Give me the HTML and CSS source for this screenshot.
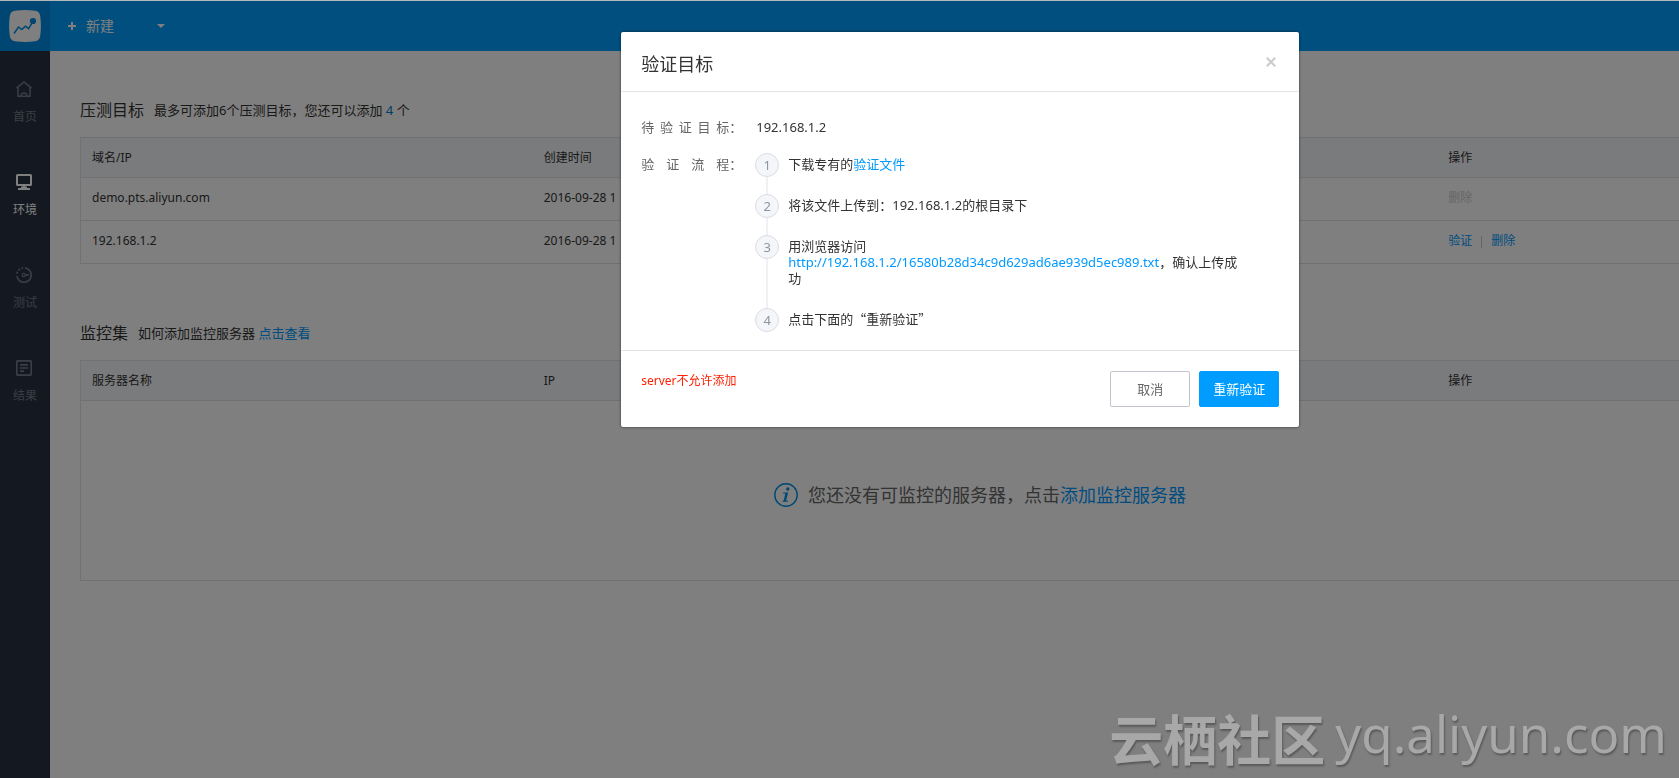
FILE: index.html
```html
<!DOCTYPE html>
<html lang="zh-CN">
<head>
<meta charset="utf-8">
<title>压测环境</title>
<link rel="stylesheet" href="styles.css">
</head>
<body>
<div class="app">
  <header class="topbar">
    <a class="logo" href="#" aria-label="PTS">
      <svg width="32" height="32" viewBox="0 0 32 32">
        <path d="M6 0.8Q16 -0.6 26 0.8Q30.6 1.4 31.2 6Q32.6 16 31.2 26Q30.6 30.6 26 31.2Q16 32.6 6 31.2Q1.4 30.6 0.8 26Q-0.6 16 0.8 6Q1.4 1.4 6 0.8Z" fill="#fff"/>
        <path d="M5 23.5L9.5 17L12.8 19.6L16.4 16.2L19.6 18.6L24 11.5" fill="none" stroke="#008ce6" stroke-width="1.5"/>
        <circle cx="24" cy="11" r="3.1" fill="#008ce6"/>
      </svg>
    </a>
    <button class="create" type="button">
      <svg width="8" height="8" viewBox="0 0 8 8"><path d="M4 0V8M0 4H8" stroke="currentColor" stroke-width="2"/></svg>
      <span class="create-text">新建</span>
      <svg width="8" height="4" viewBox="0 0 8 4"><path d="M0 0H8L4 4Z" fill="currentColor"/></svg>
    </button>
  </header>
  <div class="body">
    <nav class="sidebar">
      <a class="nav-item" href="#">
        <svg width="16" height="16" viewBox="0 0 16 16" fill="none" stroke="currentColor" stroke-width="1.5"><path d="M0.5 7.2L8 1L15.5 7.2M2 6V15.3H5.8M14 6V15.3H10.2M5 15.3C5 10.8 11 10.8 11 15.3M5 15.3H11"/></svg>
        <span>首页</span>
      </a>
      <a class="nav-item active" href="#">
        <svg width="16" height="16" viewBox="0 0 16 16" fill="none" stroke="currentColor" stroke-width="2"><rect x="1" y="1" width="14" height="10" rx="0.5"/><path d="M8 11V14M2 15H14M5 13.4H11"/></svg>
        <span>环境</span>
      </a>
      <a class="nav-item" href="#">
        <svg width="16" height="16" viewBox="0 0 16 16" fill="none" stroke="currentColor" stroke-width="1.7"><path d="M9 0.9A7.2 7.2 0 1 1 0.9 9"/><path d="M0.9 6.6A7.2 7.2 0 0 1 7 0.9" stroke-dasharray="2 1.6"/><circle cx="7.8" cy="8" r="1.6" stroke-width="1.2"/><path d="M9.4 8H13"/></svg>
        <span>测试</span>
      </a>
      <a class="nav-item" href="#">
        <svg width="16" height="16" viewBox="0 0 16 16" fill="none" stroke="currentColor" stroke-width="1.7"><rect x="0.8" y="0.8" width="14.4" height="14.4" rx="1"/><path d="M4 4.8H12M4 8H12M4 11.2H8"/></svg>
        <span>结果</span>
      </a>
    </nav>
    <main class="content">
      <section class="block">
        <div class="heading">
          <h2>压测目标</h2>
          <p>最多可添加6个压测目标，您还可以添加 <span class="count">4</span> 个</p>
        </div>
        <table class="grid">
          <thead><tr><th>域名/IP</th><th>创建时间</th><th></th><th>操作</th></tr></thead>
          <tbody>
            <tr><td>demo.pts.aliyun.com</td><td>2016-09-28 1</td><td></td><td><span class="disabled">删除</span></td></tr>
            <tr><td>192.168.1.2</td><td>2016-09-28 1</td><td></td><td><a href="#">验证</a><span class="divider"></span><a href="#">删除</a></td></tr>
          </tbody>
        </table>
      </section>
      <section class="block">
        <div class="heading">
          <h2>监控集</h2>
          <p>如何添加监控服务器 <a href="#">点击查看</a></p>
        </div>
        <table class="grid">
          <thead><tr><th>服务器名称</th><th>IP</th><th></th><th>操作</th></tr></thead>
          <tbody>
            <tr>
              <td class="empty" colspan="4">
                <div class="empty-inner">
                  <svg width="24" height="24" viewBox="0 0 24 24"><circle cx="12" cy="12" r="11.2" fill="none" stroke="#0091ea" stroke-width="1.4"/><circle cx="13.8" cy="6" r="1.7" fill="#0091ea"/><path d="M9.2 9.4H14.2L12 17.6H13.8V18.8H8.6V17.8H9.6L11.4 10.6H9Z" fill="#0091ea"/></svg>
                  <span>您还没有可监控的服务器，点击<a href="#">添加监控服务器</a></span>
                </div>
              </td>
            </tr>
          </tbody>
        </table>
      </section>
    </main>
  </div>
</div>

<div class="overlay">
  <div class="modal" role="dialog" aria-labelledby="modal-title">
    <div class="modal-head">
      <h1 id="modal-title">验证目标</h1>
      <button class="close" type="button" aria-label="关闭">
        <svg width="10" height="10" viewBox="0 0 10 10"><path d="M0.8 0.8L9.2 9.2M9.2 0.8L0.8 9.2" stroke="currentColor" stroke-width="2.2"/></svg>
      </button>
    </div>
    <div class="modal-body">
      <div class="field">
        <div class="label"><span>待验证目标</span>：</div>
        <div class="value">192.168.1.2</div>
      </div>
      <div class="field">
        <div class="label"><span>验证流程</span>：</div>
        <ol class="steps">
          <li><span class="num">1</span><p>下载专有的<a href="#">验证文件</a></p></li>
          <li><span class="num">2</span><p>将该文件上传到：192.168.1.2的根目录下</p></li>
          <li><span class="num">3</span><p>用浏览器访问<br><a href="#">http://192.168.1.2/16580b28d34c9d629ad6ae939d5ec989.txt</a>，确认上传成功</p></li>
          <li><span class="num">4</span><p class="cjk">点击下面的“重新验证”</p></li>
        </ol>
      </div>
    </div>
    <div class="modal-foot">
      <p class="error">server不允许添加</p>
      <button class="btn" type="button">取消</button>
      <button class="btn primary" type="button">重新验证</button>
    </div>
  </div>
</div>
<div class="watermark"><b>云栖社区</b><span>yq.aliyun.com</span></div>
</body>
</html>
```
FILE: styles.css
```css
* { box-sizing: border-box; }

html, body { height: 100%; }

body {
  margin: 0;
  overflow: hidden;
  border-top: 1px solid #b4b8ba;
  background: #fff;
  color: #333;
  font: 12px/16px "Noto Sans", "Noto Sans CJK SC", sans-serif;
}

h1, h2, p, ol { margin: 0; padding: 0; font-weight: 400; }
a { color: #0099ff; text-decoration: none; }
svg { display: block; flex: none; }
button { font: inherit; cursor: pointer; }

.app { display: flex; flex-direction: column; height: 100%; }

.topbar { display: flex; height: 50px; flex: none; background: #009fff; color: #fff; }
.logo { display: flex; width: 50px; align-items: center; justify-content: center; background: #008ce6; }
.create {
  display: flex;
  align-items: center;
  padding: 0 18px;
  border: 0;
  background: none;
  color: #fff;
  font-size: 14px;
}
.create-text { margin: 0 43px 0 10px; }

.body { display: flex; flex: 1; min-height: 0; }

.sidebar { display: flex; flex: none; flex-direction: column; gap: 45px; width: 50px; padding-top: 30px; background: #283243; }
.nav-item { display: flex; flex-direction: column; align-items: center; gap: 11px; height: 48px; color: #747b8a; }
.nav-item svg { margin-right: 2px; }
.nav-item span { line-height: 18px; }
.nav-item.active { color: #fff; }

.content { flex: 1; min-width: 0; padding: 47px 0 0 30px; overflow: hidden; }
.block { width: calc(100% + 211px); margin-bottom: 57px; }
.heading { display: flex; align-items: center; gap: 10px; height: 24px; margin-bottom: 15px; }
.heading h2 { font-size: 16px; }
.heading p { font-size: 13px; }
.count { color: #0078c8; }

.grid { width: 100%; table-layout: fixed; border-collapse: collapse; border: 1px solid #dfe3e8; }
.grid th, .grid td { height: 43px; padding: 0 11px 2px; border-bottom: 1px solid #dfe3e8; text-align: left; font-weight: 400; }
.grid th { height: 40px; padding-bottom: 0; background: #f5f6fa; }
.disabled { color: #ccc; }
.divider { display: inline-block; width: 1px; height: 12px; margin: 0 9px; background: #ccc; vertical-align: middle; }
.grid .empty { height: 180px; padding: 8px 10px 0; }
.empty-inner { display: flex; align-items: center; justify-content: center; gap: 10px; padding-right: 10px; color: #666; font-size: 18px; line-height: 24px; }

.overlay { position: fixed; inset: 1px 0 0; padding: 31px 0 0 37%; background: rgba(0, 0, 0, 0.5); }
.modal { width: 678px; border-radius: 2px; background: #fff; box-shadow: 0 0 3px rgba(0, 0, 0, 0.6); font-size: 13px; }
.modal-head { display: flex; align-items: center; justify-content: space-between; height: 60px; padding: 4px 20px 0; border-bottom: 1px solid #e3e3e3; }
.modal-head h1 { font-size: 18px; line-height: 24px; }
.close { padding: 2px; margin: 0 1px 4px; border: 0; background: none; color: #ccc; }

.modal-body { display: flex; flex-direction: column; gap: 21px; padding: 27px 20px 23px; }
.field { display: flex; line-height: 16px; }
.label { display: flex; flex: none; width: 115px; color: #666; }
.label span { width: 88px; text-align-last: justify; }
.label, .empty-inner { white-space: nowrap; }
.steps { display: flex; flex-direction: column; width: 488px; list-style: none; }
.steps li { position: relative; display: flex; gap: 9px; padding-bottom: 25px; }
.steps li:last-child { padding-bottom: 0; }
.steps li::before { content: ""; position: absolute; top: 0; bottom: 0; left: 10px; width: 2px; background: #f0f1f4; }
.steps li:last-child::before { display: none; }
.num {
  position: relative;
  flex: none;
  width: 24px;
  height: 24px;
  margin: -3px 0 -5px -1px;
  border: 1px solid #d9dde4;
  border-radius: 50%;
  background: #f5f6fa;
  color: #8a97a3;
  line-height: 22px;
  text-align: center;
}
.cjk { font-family: "Noto Sans CJK SC", sans-serif; }

.modal-foot { display: flex; gap: 9px; padding: 20px; border-top: 1px solid #e3e3e3; }
.error { flex: 1; padding-top: 2px; color: #ff1e00; font-size: 12px; }
.btn { width: 80px; height: 36px; padding: 0; border: 1px solid #c3c5cc; border-radius: 2px; background: #fff; color: #666; font-size: 13px; }
.btn.primary { border-color: #009cff; background: #009cff; color: #fff; }

.watermark {
  position: fixed;
  right: 12px;
  bottom: 0;
  display: flex;
  align-items: flex-start;
  gap: 10px;
  color: #a8a8a8;
  font: 54px/80px "Noto Sans CJK SC", sans-serif;
  text-shadow: 1px 2px 2px rgba(0, 0, 0, 0.3);
  pointer-events: none;
}
.watermark span { font: 51px/70px "Noto Sans", sans-serif; }
```
